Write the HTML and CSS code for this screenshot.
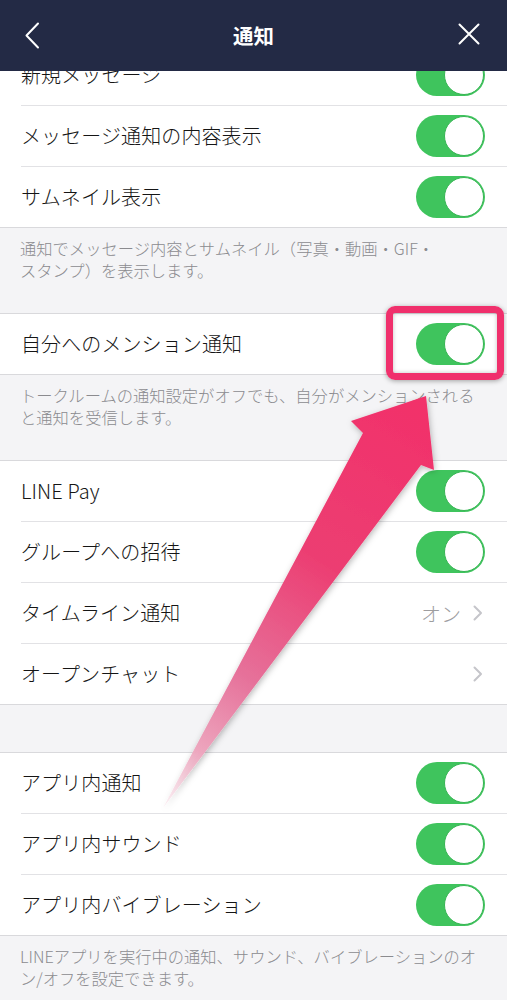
FILE: index.html
```html
<!DOCTYPE html>
<html lang="ja">
<head>
    <meta charset="UTF-8">
    <meta name="viewport" content="width=device-width, initial-scale=1.0">
    <title>通知</title>
    <link rel="stylesheet" href="styles.css">
</head>
<body>
    <header class="nav">
        <button class="nav-btn back" aria-label="戻る">
            <svg width="16" height="27" viewBox="0 0 16 27"><path d="M14 1.5 L2.5 13.5 L14 25.5" fill="none" stroke="#fff" stroke-width="2" stroke-linecap="round" stroke-linejoin="round"/></svg>
        </button>
        <h1 class="nav-title">通知</h1>
        <button class="nav-btn close" aria-label="閉じる">
            <svg width="22" height="22" viewBox="0 0 22 22"><path d="M1.5 1.5 L20.5 20.5 M20.5 1.5 L1.5 20.5" fill="none" stroke="#fff" stroke-width="2" stroke-linecap="round"/></svg>
        </button>
    </header>

    <main class="settings">
        <section class="group">
            <div class="row"><div class="row-body"><span class="label">新規メッセージ</span><span class="toggle"><span class="knob"></span></span></div></div>
            <div class="row"><div class="row-body"><span class="label">メッセージ通知の内容表示</span><span class="toggle"><span class="knob"></span></span></div></div>
            <div class="row"><div class="row-body"><span class="label">サムネイル表示</span><span class="toggle"><span class="knob"></span></span></div></div>
        </section>
        <p class="note">通知でメッセージ内容とサムネイル（写真・動画・GIF・<br>スタンプ）を表示します。</p>

        <section class="group">
            <div class="row"><div class="row-body"><span class="label">自分へのメンション通知</span><span class="toggle"><span class="knob"></span></span></div></div>
        </section>
        <p class="note">トークルームの通知設定がオフでも、自分がメンションされる<br>と通知を受信します。</p>

        <section class="group">
            <div class="row"><div class="row-body"><span class="label">LINE Pay</span><span class="toggle"><span class="knob"></span></span></div></div>
            <div class="row"><div class="row-body"><span class="label">グループへの招待</span><span class="toggle"><span class="knob"></span></span></div></div>
            <div class="row">
                <div class="row-body">
                    <span class="label">タイムライン通知</span>
                    <span class="detail">オン<svg class="chevron" width="10" height="16" viewBox="0 0 10 16"><path d="M1.5 1.5 L8 8 L1.5 14.5" fill="none" stroke="#c5c5ca" stroke-width="2" stroke-linecap="round" stroke-linejoin="round"/></svg></span>
                </div>
            </div>
            <div class="row">
                <div class="row-body">
                    <span class="label">オープンチャット</span>
                    <span class="detail"><svg class="chevron" width="10" height="16" viewBox="0 0 10 16"><path d="M1.5 1.5 L8 8 L1.5 14.5" fill="none" stroke="#c5c5ca" stroke-width="2" stroke-linecap="round" stroke-linejoin="round"/></svg></span>
                </div>
            </div>
        </section>
        <div class="spacer"></div>

        <section class="group">
            <div class="row"><div class="row-body"><span class="label">アプリ内通知</span><span class="toggle"><span class="knob"></span></span></div></div>
            <div class="row"><div class="row-body"><span class="label">アプリ内サウンド</span><span class="toggle"><span class="knob"></span></span></div></div>
            <div class="row"><div class="row-body"><span class="label">アプリ内バイブレーション</span><span class="toggle"><span class="knob"></span></span></div></div>
        </section>
        <p class="note">LINEアプリを実行中の通知、サウンド、バイブレーションのオ<br>ン/オフを設定できます。</p>
    </main>

    <!-- annotation overlay -->
    <div class="highlight"></div>
    <svg class="arrow" width="507" height="1000" viewBox="0 0 507 1000">
        <defs>
            <linearGradient id="arrowFill" gradientUnits="userSpaceOnUse" x1="426" y1="396" x2="160" y2="808">
                <stop offset="0" stop-color="#f2306a"/>
                <stop offset="0.4" stop-color="#ec3e72"/>
                <stop offset="0.68" stop-color="#e6719a"/>
                <stop offset="0.86" stop-color="#eda6be"/>
                <stop offset="1" stop-color="#f8dce6" stop-opacity="0.4"/>
            </linearGradient>
            <filter id="arrowShadow" x="-20%" y="-20%" width="140%" height="140%">
                <feDropShadow dx="1" dy="2" stdDeviation="3" flood-color="#000" flood-opacity="0.28"/>
            </filter>
        </defs>
        <polygon points="426,396 434,470 421,465 163,808 363,433 351,421" fill="url(#arrowFill)" filter="url(#arrowShadow)"/>
    </svg>
</body>
</html>
```

FILE: styles.css
```css
:root {
    --nav-bg: #232a45;
    --page-bg: #f4f4f6;
    --line: #e2e2e5;
    --group-line: #d9d9dc;
    --text: #151515;
    --note: #8b8b8f;
    --green: #3fc45d;
    --pink: #f0306c;
}

* {
    margin: 0;
    padding: 0;
    box-sizing: border-box;
}

body {
    position: relative;
    background-color: var(--page-bg);
    color: var(--text);
    font-family: "Noto Sans CJK JP", "Noto Sans", sans-serif;
    overflow: hidden;
}

.nav {
    position: fixed;
    top: 0;
    left: 0;
    right: 0;
    height: 71px;
    z-index: 10;
    background-color: var(--nav-bg);
    display: grid;
    grid-template-columns: 80px 1fr 80px;
    align-items: center;
}

.nav-btn {
    background: none;
    border: none;
    display: flex;
    align-items: center;
}

.nav-btn.back {
    padding-left: 24px;
    margin-top: -1px;
}

.nav-btn.close {
    justify-content: flex-end;
    padding-right: 27px;
    margin-top: -4px;
}

.nav-title {
    text-align: center;
    color: #fff;
    font-size: 20.5px;
    font-weight: 700;
    margin-top: -2px;
}

.settings {
    padding-top: 44px;
}

.group {
    background-color: #fff;
    border-top: 1px solid var(--group-line);
    border-bottom: 1px solid var(--group-line);
}

.row {
    padding-left: 21px;
}

.row-body {
    height: 61px;
    display: flex;
    align-items: center;
    justify-content: space-between;
    padding-right: 22px;
    border-bottom: 1px solid var(--line);
}

.row:last-child .row-body {
    height: 60px;
    border-bottom: none;
}

.label {
    font-size: 20px;
    font-weight: 300;
    line-height: 1;
    letter-spacing: 0.1px;
}

.toggle {
    width: 69px;
    height: 42px;
    border-radius: 21px;
    background-color: var(--green);
    display: flex;
    justify-content: flex-end;
    align-items: center;
    padding: 1px;
}

.knob {
    width: 40px;
    height: 40px;
    border-radius: 50%;
    background-color: #fff;
    border: 1.5px solid #36b553;
}

.detail {
    display: flex;
    align-items: center;
    gap: 12px;
    color: #9d9d9f;
    font-size: 20px;
    font-weight: 300;
    margin-right: 2px;
}

.note {
    padding: 9px 20px 32px;
    color: var(--note);
    font-size: 16.3px;
    font-weight: 300;
    line-height: 22px;
}

.spacer {
    height: 47px;
}

.highlight {
    position: absolute;
    left: 386px;
    top: 306px;
    width: 118px;
    height: 74px;
    border: 7px solid var(--pink);
    border-radius: 9px;
    box-shadow: 0 1px 5px rgba(0, 0, 0, 0.35), inset 0 0 4px rgba(0, 0, 0, 0.25);
}

.arrow {
    position: absolute;
    top: 0;
    left: 0;
    pointer-events: none;
}
```
